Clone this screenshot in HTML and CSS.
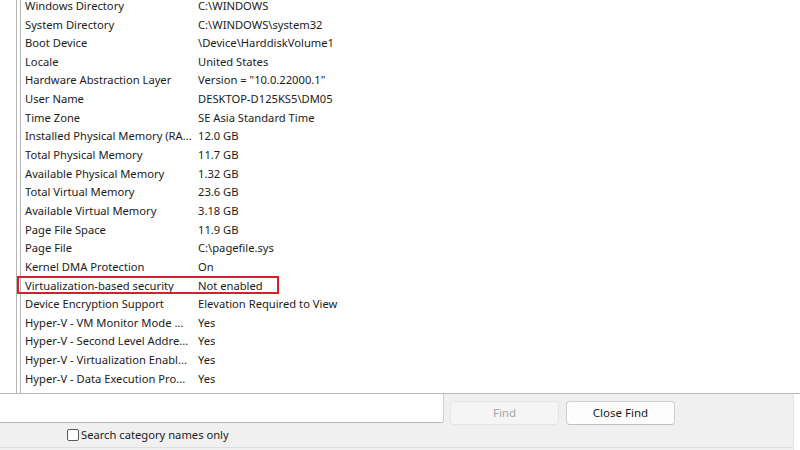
FILE: index.html
```html
<!DOCTYPE html>
<html>
<head>
<meta charset="utf-8">
<link rel="stylesheet" href="styles.css">
</head>
<body>
<div class="app">
  <div class="panes">
    <div class="tree"></div>
    <div class="list">
      <div class="rows">
        <div class="row"><span class="name">Windows Directory</span><span class="val">C:\WINDOWS</span></div>
        <div class="row"><span class="name">System Directory</span><span class="val">C:\WINDOWS\system32</span></div>
        <div class="row"><span class="name">Boot Device</span><span class="val">\Device\HarddiskVolume1</span></div>
        <div class="row"><span class="name">Locale</span><span class="val">United States</span></div>
        <div class="row"><span class="name">Hardware Abstraction Layer</span><span class="val">Version = "10.0.22000.1"</span></div>
        <div class="row"><span class="name">User Name</span><span class="val">DESKTOP-D125KS5\DM05</span></div>
        <div class="row"><span class="name">Time Zone</span><span class="val">SE Asia Standard Time</span></div>
        <div class="row"><span class="name">Installed Physical Memory (RA...</span><span class="val">12.0 GB</span></div>
        <div class="row"><span class="name">Total Physical Memory</span><span class="val">11.7 GB</span></div>
        <div class="row"><span class="name">Available Physical Memory</span><span class="val">1.32 GB</span></div>
        <div class="row"><span class="name">Total Virtual Memory</span><span class="val">23.6 GB</span></div>
        <div class="row"><span class="name">Available Virtual Memory</span><span class="val">3.18 GB</span></div>
        <div class="row"><span class="name">Page File Space</span><span class="val">11.9 GB</span></div>
        <div class="row"><span class="name">Page File</span><span class="val">C:\pagefile.sys</span></div>
        <div class="row"><span class="name">Kernel DMA Protection</span><span class="val">On</span></div>
        <div class="row marked"><span class="name">Virtualization-based security</span><span class="val">Not enabled</span><span class="redbox"></span></div>
        <div class="row"><span class="name">Device Encryption Support</span><span class="val">Elevation Required to View</span></div>
        <div class="row"><span class="name">Hyper-V - VM Monitor Mode ...</span><span class="val">Yes</span></div>
        <div class="row"><span class="name">Hyper-V - Second Level Addre...</span><span class="val">Yes</span></div>
        <div class="row"><span class="name">Hyper-V - Virtualization Enabl...</span><span class="val">Yes</span></div>
        <div class="row"><span class="name">Hyper-V - Data Execution Pro...</span><span class="val">Yes</span></div>
      </div>
    </div>
  </div>
  <div class="findbar">
    <div class="findrow">
      <div class="input"></div>
      <div class="btn disabled">Find</div>
      <div class="btn">Close Find</div>
    </div>
    <div class="checkrow">
      <span class="check"></span>
      <span class="label">Search category names only</span>
    </div>
  </div>
</div>
</body>
</html>
```
FILE: styles.css
```css
html, body {
  margin: 0;
  padding: 0;
  width: 800px;
  height: 450px;
  overflow: hidden;
  background: #ffffff;
}
.app {
  width: 800px;
  height: 450px;
  display: flex;
  flex-direction: column;
  font-family: "Noto Sans", "Open Sans", sans-serif;
  color: #1b1b1b;
}
.panes {
  height: 393px;
  display: flex;
  border-bottom: 1px solid #b9b9b9;
  overflow: hidden;
}
.tree {
  width: 16px;
  border-right: 1px solid #b4b4b4;
  flex: none;
}
.list {
  margin-left: 3px;
  flex: 1;
  border-left: 1px solid #b4b4b4;
  overflow: visible;
}
.rows {
  margin-top: -3.4px;
}
.row {
  position: relative;
  display: grid;
  grid-template-columns: 173px 1fr;
  height: 18.65px;
  align-items: center;
  padding-left: 4px;
  font-size: 11.2px;
  white-space: nowrap;
}
.name, .val {
  overflow: hidden;
  line-height: 18px;
}
.redbox {
  position: absolute;
  left: -4px;
  top: 0px;
  width: 258px;
  height: 14px;
  border: 2px solid #d3202c;
}
.findbar {
  flex: 1;
  background: #f0f0f0;
  display: flex;
  flex-direction: column;
  border-right: 1px solid #e4e4e4;
  width: 793px;
}
.findrow {
  display: flex;
  align-items: flex-start;
  height: 29px;
}
.input {
  width: 443px;
  height: 28px;
  background: #ffffff;
  border-right: 1px solid #cfcfcf;
  border-bottom: 1px solid #b6b6b6;
  border-radius: 0 0 3px 0;
  flex: none;
}
.btn {
  margin-top: 7px;
  margin-left: 6px;
  width: 107px;
  height: 22px;
  border: 1px solid #d0d0d0;
  border-bottom-color: #c0c0c0;
  border-radius: 4px;
  background: #fdfdfd;
  font-size: 11.5px;
  line-height: 22px;
  text-align: center;
  color: #1b1b1b;
  flex: none;
}
.btn + .btn {
  margin-left: 7px;
}
.btn.disabled {
  background: #f5f5f5;
  border-color: #e5e5e5;
  color: #a6a6a6;
}
.checkrow {
  height: 24px;
  display: flex;
  align-items: center;
  padding-left: 67px;
  border-bottom: 1px solid #dedede;
  font-size: 11.2px;
}
.check {
  width: 10px;
  height: 10px;
  border: 1px solid #5a5a5a;
  border-radius: 2px;
  background: #ffffff;
  margin-right: 2px;
  flex: none;
}
.label {
  line-height: 20px;
  color: #1b1b1b;
}
```
